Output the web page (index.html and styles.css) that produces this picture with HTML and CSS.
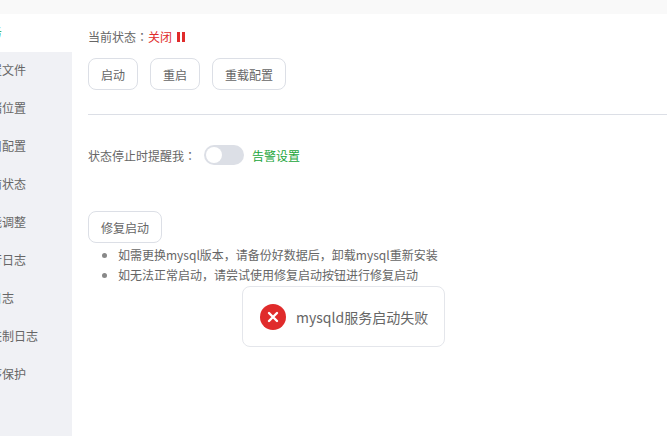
FILE: index.html
```html
<!DOCTYPE html>
<html>
<head>
    <meta name="viewport" content="width=device-width, initial-scale=1" />
    <title>mysql</title>
    <link rel="stylesheet" href="styles.css">
</head>

<body>

<div class="top-strip"></div>

<div class="panel">
    <ul class="side-menu">
        <li class="active">服务</li>
        <li>配置文件</li>
        <li>存储位置</li>
        <li>端口配置</li>
        <li>当前状态</li>
        <li>性能调整</li>
        <li>运行日志</li>
        <li>慢日志</li>
        <li>二进制日志</li>
        <li>程序保护</li>
    </ul>

    <div class="content">
        <p class="status">当前状态<span class="colon">：</span><span class="off">关闭</span><span class="pause"></span></p>
        <div class="button-row">
            <button class="button">启动</button>
            <button class="button">重启</button>
            <button class="button">重载配置</button>
        </div>

        <div class="divider"></div>

        <div class="alert-row">
            <span>状态停止时提醒我<span class="colon">：</span></span>
            <span class="switch"><span class="knob"></span></span>
            <a class="alert-link">告警设置</a>
        </div>

        <button class="button">修复启动</button>
        <ul class="tips">
            <li>如需更换mysql版本，请备份好数据后，卸载mysql重新安装</li>
            <li>如无法正常启动，请尝试使用修复启动按钮进行修复启动</li>
        </ul>
    </div>
</div>

<div class="toast">
    <svg class="toast-icon" width="26" height="26" viewBox="0 0 26 26">
        <circle cx="13" cy="13" r="13" fill="#e02b2b"/>
        <path d="M9 9L17 17M17 9L9 17" stroke="#ffffff" stroke-width="2.4" stroke-linecap="round"/>
    </svg>
    <span>mysqld服务启动失败</span>
</div>

</body>
</html>
```

FILE: styles.css
```css
html, body {
    height: 100%;
}

body {
    margin: 0;
    padding: 0;
    overflow: hidden;
    background-color: #ffffff;
    color: #666666;
    font-family: "Noto Sans CJK SC", "Open Sans", sans-serif;
    font-size: 12px;
    display: flex;
    flex-direction: column;
}

.top-strip {
    height: 14px;
    flex: none;
    background-color: #f9f9f9;
}

.panel {
    flex: 1;
    display: flex;
    min-height: 0;
}

.side-menu {
    width: 72px;
    flex: none;
    margin: 0;
    padding: 0;
    list-style: none;
    overflow: hidden;
    background-color: #f0f1f5;
}

.side-menu li {
    height: 38px;
    line-height: 36px;
    margin-left: -22px;
    padding-left: 0;
    white-space: nowrap;
}

.side-menu li.active {
    margin-left: 0;
    text-indent: -22px;
    background-color: #ffffff;
    color: #20a53a;
}

.content {
    flex: 1;
    min-width: 0;
    padding-left: 16px;
}

.status {
    margin: 14px 0 0;
    height: 18px;
    line-height: 18px;
    display: flex;
    align-items: center;
}

.colon {
    font-family: "Noto Sans CJK TC", sans-serif;
}

.off {
    color: #e02b2b;
}

.pause {
    width: 2px;
    height: 10px;
    margin-left: 5px;
    border-left: 3px solid #e02b2b;
    border-right: 3px solid #e02b2b;
}

.button-row {
    display: flex;
    gap: 12px;
    margin-top: 12px;
}

.button {
    display: block;
    height: 32px;
    padding: 0 12px;
    background-color: #ffffff;
    color: #666666;
    font-family: inherit;
    font-size: 12px;
    border: 1px solid #dcdfe6;
    border-radius: 8px;
}

.divider {
    height: 1px;
    margin-top: 24px;
    background-color: #dcdfe6;
}

.alert-row {
    display: flex;
    align-items: center;
    height: 20px;
    margin-top: 30px;
    margin-bottom: 46px;
}

.switch {
    width: 40px;
    height: 20px;
    margin-left: 8px;
    border-radius: 10px;
    background-color: #dcdfe6;
    display: flex;
    align-items: center;
    padding-left: 2px;
    box-sizing: border-box;
}

.knob {
    width: 16px;
    height: 16px;
    border-radius: 50%;
    background-color: #ffffff;
}

.alert-link {
    margin-left: 8px;
    color: #20a53a;
}

.tips {
    margin: 2px 0 0;
    padding-left: 30px;
}

.tips li {
    height: 20px;
    line-height: 20px;
}

.tips li::marker {
    color: #888888;
}

.toast {
    position: absolute;
    left: 242px;
    top: 286px;
    width: 203px;
    height: 61px;
    box-sizing: border-box;
    padding-left: 17px;
    display: flex;
    align-items: center;
    gap: 10px;
    background-color: #ffffff;
    border: 1px solid #e4e6eb;
    border-radius: 8px;
    font-size: 14px;
}

.toast-icon {
    flex: none;
}
```
